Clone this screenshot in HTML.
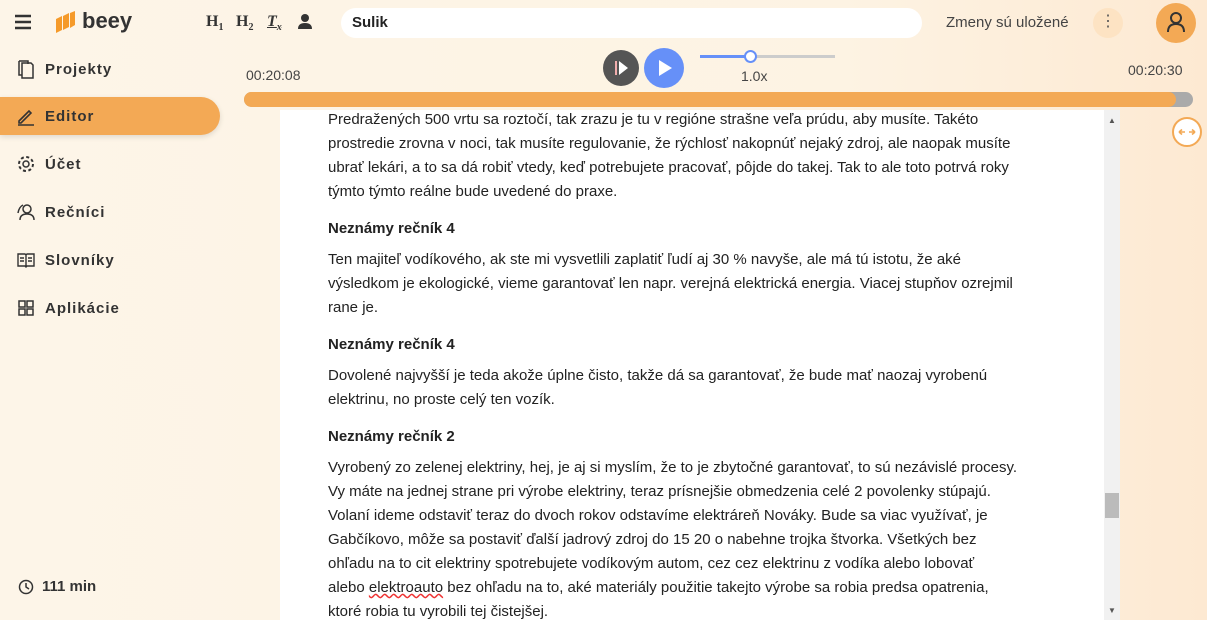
<!DOCTYPE html>
<html><head><meta charset="utf-8"><style>
*{margin:0;padding:0;box-sizing:border-box}
body{width:1207px;height:620px;overflow:hidden;font-family:"Liberation Sans",sans-serif;background:linear-gradient(90deg,#fdf5e8 0%,#fdf3e3 70%,#fde9d2 100%);position:relative;color:#333}
.abs{position:absolute}
.nav{position:absolute;left:0;width:220px;height:38px;display:flex;align-items:center;font-size:15px;font-weight:bold;letter-spacing:1px;color:#333}
.nav svg{position:absolute;left:16px}
.nav span{position:absolute;left:45px}
.txt{position:absolute;left:280px;top:110px;width:840px;height:510px;background:#fff;overflow:hidden}
.txt .in{position:absolute;left:48px;top:-2px;width:770px;font-size:15px;line-height:24px;color:#222;white-space:nowrap}
.txt p{margin-bottom:13px}
.txt h4{font-size:15px;line-height:24px;margin-bottom:7px}
</style></head><body>
<svg class="abs" style="left:14px;top:14px" width="18" height="16"><path d="M1 2h16M1 8h16M1 14h16" stroke="#333" stroke-width="2.4"/></svg>
<svg class="abs" style="left:54px;top:11px" width="22" height="24"><path d="M2 8l6-3v14l-6 3z M9 5l6-3v14l-6 3z M16 2l5-2v14l-5 3z" fill="#f59a2a"/></svg>
<div class="abs" style="left:82px;top:8px;font-size:22px;font-weight:bold;color:#333">beey</div>
<div class="abs" style="left:206px;top:13px;font-family:'Liberation Serif',serif;font-weight:bold;font-size:16px;color:#333">H<sub style="font-size:10px">1</sub></div>
<div class="abs" style="left:236px;top:13px;font-family:'Liberation Serif',serif;font-weight:bold;font-size:16px;color:#333">H<sub style="font-size:10px">2</sub></div>
<div class="abs" style="left:267px;top:13px;font-family:'Liberation Serif',serif;font-weight:bold;font-style:italic;font-size:16px;color:#333;text-decoration:underline">T<sub style="font-size:10px">x</sub></div>
<svg class="abs" style="left:297px;top:13px" width="16" height="16"><circle cx="8" cy="5" r="4" fill="#333"/><path d="M1 16q0-6 7-6t7 6z" fill="#333"/></svg>
<div class="abs" style="left:341px;top:8px;width:581px;height:30px;background:#fff;border-radius:15px;font-size:15px;font-weight:bold;padding:6px 11px;color:#222">Sulik</div>
<div class="abs" style="left:946px;top:14px;font-size:15px;color:#444">Zmeny sú uložené</div>
<div class="abs" style="left:1093px;top:8px;width:30px;height:30px;border-radius:50%;background:#fde3c3;text-align:center;line-height:28px;color:#555;font-size:16px">⋮</div>
<div class="abs" style="left:1156px;top:3px;width:40px;height:40px;border-radius:50%;background:#f3a955"></div>
<svg class="abs" style="left:1166px;top:11px" width="20" height="22"><circle cx="10" cy="7" r="5" fill="none" stroke="#333" stroke-width="2"/><path d="M2 21q0-8 8-8t8 8" fill="none" stroke="#333" stroke-width="2"/></svg>
<div class="nav" style="top:50px"><svg width="20" height="20"><path d="M6 4h9l2 2v13H6z M3 2h9v3 M3 2v14h3" fill="none" stroke="#333" stroke-width="1.5"/></svg><span>Projekty</span></div>
<div class="nav" style="top:97px;background:#f3a955;border-radius:0 19px 19px 0;box-shadow:0 2px 6px rgba(0,0,0,.12)"><svg width="20" height="20"><path d="M3 15l10-10 2 2-10 10H3z M2 19h16" fill="none" stroke="#333" stroke-width="1.6"/></svg><span>Editor</span></div>
<div class="nav" style="top:145px"><svg width="20" height="20"><circle cx="10" cy="10" r="3" fill="none" stroke="#333" stroke-width="1.5"/><circle cx="10" cy="10" r="7" fill="none" stroke="#333" stroke-width="2" stroke-dasharray="3 2.5"/></svg><span>Účet</span></div>
<div class="nav" style="top:193px"><svg width="20" height="20"><circle cx="11" cy="7" r="4" fill="none" stroke="#333" stroke-width="1.5"/><path d="M4 18q0-6 7-6t7 6M2 11q1-6 5-8" fill="none" stroke="#333" stroke-width="1.5"/></svg><span>Rečníci</span></div>
<div class="nav" style="top:241px"><svg width="20" height="20"><path d="M2 4h7l1 1 1-1h7v12h-7l-1 1-1-1H2z M10 5v11 M4 8h4M4 11h4M12 8h4M12 11h4" fill="none" stroke="#333" stroke-width="1.4"/></svg><span>Slovníky</span></div>
<div class="nav" style="top:289px"><svg width="20" height="20"><path d="M3 3h6v6H3zM11 3h6v6h-6zM3 11h6v6H3zM11 11h6v6h-6z" fill="none" stroke="#333" stroke-width="1.5"/></svg><span>Aplikácie</span></div>
<svg class="abs" style="left:18px;top:579px" width="16" height="16"><circle cx="8" cy="8" r="6.5" fill="none" stroke="#333" stroke-width="1.5"/><path d="M8 4v4l3 2" fill="none" stroke="#333" stroke-width="1.5"/></svg>
<div class="abs" style="left:42px;top:578px;font-size:15px;font-weight:bold;color:#333">111 min</div>
<div class="abs" style="left:246px;top:67px;font-size:14px;color:#444">00:20:08</div>
<div class="abs" style="left:1128px;top:62px;font-size:14px;color:#444">00:20:30</div>
<div class="abs" style="left:603px;top:50px;width:36px;height:36px;border-radius:50%;background:#555"></div>
<svg class="abs" style="left:603px;top:50px" width="36" height="36"><path d="M13 11v14" stroke="#fff" stroke-width="2"/><path d="M16 11l9 7-9 7z" fill="#fff"/><path d="M13 11v14" stroke="#d33" stroke-width="0.8"/></svg>
<div class="abs" style="left:644px;top:48px;width:40px;height:40px;border-radius:50%;background:#6690f8"></div>
<svg class="abs" style="left:644px;top:48px" width="40" height="40"><path d="M15 12l13 8-13 8z" fill="#fff"/></svg>
<div class="abs" style="left:700px;top:55px;width:135px;height:3px;background:#ccc"></div>
<div class="abs" style="left:700px;top:55px;width:50px;height:3px;background:#6690f8"></div>
<div class="abs" style="left:744px;top:50px;width:13px;height:13px;border-radius:50%;background:#fff;border:2px solid #6690f8"></div>
<div class="abs" style="left:741px;top:68px;font-size:14px;color:#444">1.0x</div>
<div class="abs" style="left:244px;top:92px;width:949px;height:15px;border-radius:8px;background:#aaa"></div>
<div class="abs" style="left:244px;top:92px;width:932px;height:15px;border-radius:8px;background:#f3a955"></div>
<div class="abs" style="left:1172px;top:117px;width:30px;height:30px;border-radius:50%;background:#fff;border:2px solid #f3a955"></div>
<svg class="abs" style="left:1172px;top:117px" width="30" height="30"><path d="M7 15h16M7 15l3-2.5M7 15l3 2.5M23 15l-3-2.5M23 15l-3 2.5" stroke="#f3a955" stroke-width="1.6" fill="none"/><path d="M13 15h4" stroke="#fff" stroke-width="2"/></svg>
<div class="txt"><div class="in">
<p>Predražených 500 vrtu sa roztočí, tak zrazu je tu v regióne strašne veľa prúdu, aby musíte. Takéto<br>prostredie zrovna v noci, tak musíte regulovanie, že rýchlosť nakopnúť nejaký zdroj, ale naopak musíte<br>ubrať lekári, a to sa dá robiť vtedy, keď potrebujete pracovať, pôjde do takej. Tak to ale toto potrvá roky<br>týmto týmto reálne bude uvedené do praxe.</p>
<h4>Neznámy rečník 4</h4>
<p>Ten majiteľ vodíkového, ak ste mi vysvetlili zaplatiť ľudí aj 30 % navyše, ale má tú istotu, že aké<br>výsledkom je ekologické, vieme garantovať len napr. verejná elektrická energia. Viacej stupňov ozrejmil<br>rane je.</p>
<h4>Neznámy rečník 4</h4>
<p>Dovolené najvyšší je teda akože úplne čisto, takže dá sa garantovať, že bude mať naozaj vyrobenú<br>elektrinu, no proste celý ten vozík.</p>
<h4>Neznámy rečník 2</h4>
<p>Vyrobený zo zelenej elektriny, hej, je aj si myslím, že to je zbytočné garantovať, to sú nezávislé procesy.<br>Vy máte na jednej strane pri výrobe elektriny, teraz prísnejšie obmedzenia celé 2 povolenky stúpajú.<br>Volaní ideme odstaviť teraz do dvoch rokov odstavíme elektráreň Nováky. Bude sa viac využívať, je<br>Gabčíkovo, môže sa postaviť ďalší jadrový zdroj do 15 20 o nabehne trojka štvorka. Všetkých bez<br>ohľadu na to cit elektriny spotrebujete vodíkovým autom, cez cez elektrinu z vodíka alebo lobovať<br>alebo <u style="text-decoration-color:#e33;text-decoration-style:wavy">elektroauto</u> bez ohľadu na to, aké materiály použitie takejto výrobe sa robia predsa opatrenia,<br>ktoré robia tu vyrobili tej čistejšej.</p>
</div>
<div class="abs" style="left:824px;top:0;width:16px;height:510px;background:#f1f1f1"></div>
<div class="abs" style="left:825px;top:383px;width:14px;height:25px;background:#bbb"></div>
<div class="abs" style="left:828px;top:6px;font-size:8px;color:#555">▲</div>
<div class="abs" style="left:828px;top:496px;font-size:8px;color:#555">▼</div>
</div>
</body></html>
